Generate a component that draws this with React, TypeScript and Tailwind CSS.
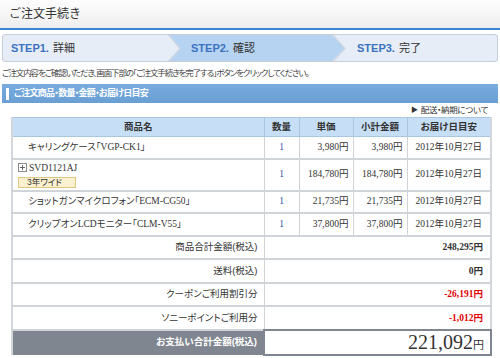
const sans = "font-['Liberation_Sans','Noto_Sans_CJK_JP',sans-serif]";
const serif = "font-['Liberation_Serif','Noto_Sans_CJK_JP',serif]";

const items = [
  { name: "キャリングケース「VGP-CK1」", price: "3,980円", date: "2012年10月27日", h: "h-[22px]" },
  { name: "SVD1121AJ", price: "184,780円", date: "2012年10月27日", h: "h-[32px]", badge: "3年ワイド" },
  { name: "ショットガンマイクロフォン「ECM-CG50」", price: "21,735円", date: "2012年10月27日", h: "h-[22px]" },
  { name: "クリップオンLCDモニター「CLM-V55」", price: "37,800円", date: "2012年10月27日", h: "h-[23px]" },
];

const summary = [
  { label: "商品合計金額(税込)", value: "248,295円", red: false },
  { label: "送料(税込)", value: "0円", red: false },
  { label: "クーポンご利用割引分", value: "-26,191円", red: true },
  { label: "ソニーポイントご利用分", value: "-1,012円", red: true },
];

const PlusBox = () => (
  <svg width="9" height="9" viewBox="0 0 9 9" className="shrink-0">
    <rect x="0.5" y="0.5" width="8" height="8" fill="#fff" stroke="#8a8a8a" />
    <path d="M2 4.5h5M4.5 2v5" stroke="#666" strokeWidth="1" />
  </svg>
);

const Steps = () => (
  <div className="relative mx-[2px] mt-[4px] flex h-[28px] overflow-hidden rounded-[3px] border border-[#c6ced8] bg-[#e7edf6] text-[11px]">
    <div className="flex w-[165px] shrink-0 items-center pl-[8px]">
      <span className="font-bold text-[#3b72c0]">STEP1.</span>
      <span className="ml-[4px] text-[#333]">詳細</span>
    </div>
    <div className="relative z-10 flex w-[177px] shrink-0 items-center bg-[#b7d3f2] pl-[23px] [clip-path:polygon(0_0,164px_0,177px_50%,164px_100%,0_100%,12px_50%)]">
      <span className="font-bold text-[#3b72c0]">STEP2.</span>
      <span className="ml-[4px] text-[#333]">確認</span>
    </div>
    <div className="-ml-[13px] flex flex-1 items-center pl-[25px]">
      <span className="font-bold text-[#3b72c0]">STEP3.</span>
      <span className="ml-[4px] text-[#333]">完了</span>
    </div>
    <svg className="pointer-events-none absolute left-0 top-0 z-20" width="496" height="28" viewBox="0 0 496 28">
      <polyline points="165,-1 177,13.5 165,28" fill="none" stroke="#cdd6e2" strokeWidth="1.2" />
      <polyline points="329,-1 342,13.5 329,28" fill="none" stroke="#cdd6e2" strokeWidth="1.2" />
    </svg>
  </div>
);

export default function App() {
  return (
    <div className={`h-[358px] w-[500px] overflow-hidden bg-white text-[#333] ${sans}`}>
      <div className="flex h-[30px] items-center border-b-2 border-[#3a85d2] bg-gradient-to-b from-[#fdfdfd] to-[#eeeeee] pl-[9px]">
        <h1 className="text-[12px] text-[#333]">ご注文手続き</h1>
      </div>

      <Steps />

      <p className="mt-[4px] whitespace-nowrap px-[2px] text-[8.5px] leading-[14px] tracking-[-1.1px] text-[#444] [font-feature-settings:'palt']">
        ご注文内容をご確認いただき、画面下部の「ご注文手続きを完了する」ボタンをクリックしてください。
      </p>

      <div className="mx-[2px] mt-[4px] flex h-[19px] items-center bg-gradient-to-b from-[#78acdf] to-[#6a9fd4] pl-[4px]">
        <span className="h-[12px] w-[3px] bg-white" />
        <span className="ml-[5px] text-[9px] font-bold tracking-[-0.7px] text-white [font-feature-settings:'palt']">
          ご注文商品・数量・金額・お届け日目安
        </span>
      </div>

      <div className="flex h-[14px] items-center justify-end pr-[12px] text-[8.5px] tracking-[-0.3px] text-[#333] [font-feature-settings:'palt']">
        <span className="mr-[3px] text-[7px]">▶</span>配送・納期について
      </div>

      <div className="pl-[11px] pr-[10px]">
        <table className={`w-[479px] table-fixed border-collapse border-x-2 border-[#d3d7dc] text-[9.5px] ${serif}`}>
          <colgroup>
            <col className="w-[252px]" />
            <col className="w-[35px]" />
            <col className="w-[54px]" />
            <col className="w-[54px]" />
            <col className="w-[84px]" />
          </colgroup>
          <thead>
            <tr className={`h-[19px] bg-[#c7dff6] ${sans} [font-feature-settings:'palt']`}>
              <th className="border border-[#a9c6e3] font-bold text-[#333]">商品名</th>
              <th className="border border-[#a9c6e3] font-bold text-[#333]">数量</th>
              <th className="border border-[#a9c6e3] font-bold text-[#333]">単価</th>
              <th className="border border-[#a9c6e3] font-bold text-[#333]">小計金額</th>
              <th className="border border-[#a9c6e3] font-bold text-[#333]">お届け日目安</th>
            </tr>
          </thead>
          <tbody>
            {items.map((it) => (
              <tr key={it.name} className={`${it.h} border-b-2 border-[#d0d4d9]`}>
                <td className="border-r border-[#d0d4d9] [font-feature-settings:'palt']">
                  {it.badge ? (
                    <div className="pl-[5px]">
                      <div className="flex items-center gap-[2px] leading-[12px]">
                        <PlusBox />
                        <span>{it.name}</span>
                      </div>
                      <div className={`mt-[3px] flex h-[11px] w-[58px] items-center border border-[#e0c783] bg-[#fcf1cf] pl-[8px] text-[8.5px] ${sans}`}>
                        {it.badge}
                      </div>
                    </div>
                  ) : (
                    <span className="pl-[15px]">{it.name}</span>
                  )}
                </td>
                <td className="border-r border-[#d0d4d9] text-center text-[#2a4fa8]">1</td>
                <td className="border-r border-[#d0d4d9] pr-[4px] text-right">{it.price}</td>
                <td className="border-r border-[#d0d4d9] pr-[4px] text-right">{it.price}</td>
                <td className="text-center">{it.date}</td>
              </tr>
            ))}
            {summary.map((s) => (
              <tr key={s.label} className="h-[23.5px] border-b-2 border-[#d0d4d9]">
                <td className={`border-r border-[#d0d4d9] pr-[6px] text-right ${sans} [font-feature-settings:'palt']`}>
                  {s.label}
                </td>
                <td colSpan={4} className={`pr-[7px] text-right font-bold ${s.red ? "text-[#e30000]" : "text-[#333]"}`}>
                  {s.value}
                </td>
              </tr>
            ))}
            <tr className="h-[25px] bg-[#7f8690]">
              <td className={`pr-[6px] text-right font-bold text-white ${sans} [font-feature-settings:'palt']`}>
                お支払い合計金額(税込)
              </td>
              <td colSpan={4} className="border-2 border-[#7f8690] bg-white pr-[6px] text-right leading-none">
                <span className="text-[20px] leading-none text-[#333]">221,092</span>
                <span className="text-[11px] text-[#333]">円</span>
              </td>
            </tr>
          </tbody>
        </table>
      </div>
    </div>
  );
}
